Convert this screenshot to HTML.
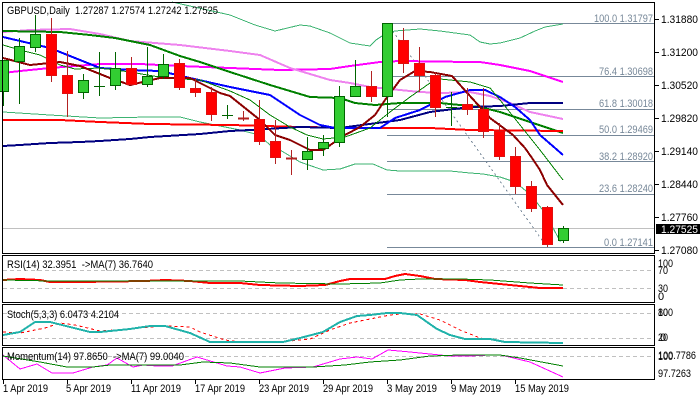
<!DOCTYPE html>
<html><head><meta charset="utf-8"><style>
html,body{margin:0;padding:0;background:#fff;width:700px;height:400px;overflow:hidden}
svg{display:block}
text{font-family:"Liberation Sans",sans-serif;font-size:11px;fill:#000;white-space:pre}
.f{fill:#778899}
.l{fill:none;shape-rendering:crispEdges}
</style></head><body>
<svg width="700" height="400" viewBox="0 0 700 400" xmlns="http://www.w3.org/2000/svg">
<rect width="700" height="400" fill="#fff"/>
<g class="l" stroke="#c0c0c0"><path d="M3 228.500H654"/></g>
<g class="l" stroke="#778899">
<path d="M387 23.500H654M387 76.500H654M387 109.500H654M387 135.500H654M387 161.500H654M387 194.500H654M387 247.500H654"/>
<path d="M387 23L547 247" stroke-dasharray="2 3"/>
</g>
<g class="l">
<path stroke="#3cb371" d="M172 2L230 15L255 25L275 31L300 25L310 26L330 33L350 43L370 46L376 40L385 34L395 31L420 29L440 31L470 35L480 42L490 44L500 43L520 38L535 31L545 27L563 24"/>
<path stroke="#3cb371" d="M3 112L50 115L100 118L150 117L180 117L200 122L220 126L240 130L259 135L270 145L280 150L300 162L323 170L340 169L355 164L373 164L387 170L400 171L450 171L470 173L483 174L500 177L515 182L531 195L545 213L560 241L563 240"/>
<path stroke="#ff00ff" stroke-width="2" d="M3 73L20 71L50 68L100 64L140 64L180 66L230 68L280 70L330 69L350 66L380 62L400 61L470 62L480 62L500 65L530 71L563 82"/>
<path stroke="#ee82ee" stroke-width="2" d="M3 32L30 30L70 29L100 34L130 41L180 45L230 51L260 55L290 68L310 74L330 80L350 83L370 87L390 89L420 92L442 93L470 92L490 96L510 103L530 112L563 119"/>
<path stroke="#008000" stroke-width="2" d="M3 31L60 32L90 35L115 38L150 45L180 56L200 62L230 72L270 85L310 97L340 98L355 103L375 105L400 103L440 103L480 107L500 112L530 122L563 133"/>
<path stroke="#ff0000" stroke-width="2" d="M3 120L60 120L100 122L150 124L230 125L300 127L370 128L430 128L470 130L563 131"/>
<path stroke="#000080" stroke-width="2" d="M3 146L20 145L50 143L80 142L100 141L130 139L150 137L200 134L230 131L250 130L300 127L340 128L362 125L400 120L430 112L470 107L500 106L530 103L563 103"/>
<path stroke="#0000ff" stroke-width="2" d="M3 37L50 48L100 68L130 70L160 71L190 78L230 87L270 95L300 115L320 125L335 128L380 128L395 118L420 110L445 97L470 90L485 90L500 97L515 107L530 120L540 135L555 148L563 155"/>
<path stroke="#008000" d="M3 45L20 50L40 55L60 65L75 69L100 68L130 72L165 78L200 80L230 91L250 100L270 115L290 127L307 135L323 139L345 137L370 128L390 112L410 97L430 83L440 79L470 82L490 88L500 100L520 125L540 150L563 180"/>
<path stroke="#8b0000" stroke-width="2" d="M3 58L30 65L60 62L80 66L110 78L130 85L160 78L190 78L220 93L230 96L260 120L275 135L290 140L310 150L323 150L345 135L360 127L375 115L385 100L400 80L415 71L430 72L452 76L470 96L490 118L513 135L525 148L532 158L540 170L547 185L563 205"/>
</g>
<g class="l" stroke="#006400">
<path d="M3.500 60V106M19.500 38V104M35.500 15V52M83.500 74V99M99.500 52V96M115.500 52V90M147.500 47V87M163.500 54V79M227.500 105V119M307.500 137V170M323.500 135V156M339.500 86V147M355.500 60V96M387.500 23V117M451.500 92V126M563.500 226V243"/>
<path d="M94 86.500H105M222 115.500H233M446 107.500H457" stroke-width="1"/>
</g>
<g class="l" stroke="#b22222">
<path d="M51.500 18V82M67.500 51V117M131.500 57V86M179.500 59V90M195.500 78V97M211.500 87V121M243.500 111V121M259.500 100V145M275.500 120V164M291.500 150V175M371.500 71V102M403.500 28V73M419.500 47V92M435.500 72V117M467.500 88V115M483.500 88V138M499.500 123V160M515.500 147V194M531.500 181V212M547.500 206V247"/>
<path d="M238 118.500H249M286 158.500H297" stroke-width="2"/>
</g>
<g fill="#32cd32" stroke="#006400" stroke-width="1" shape-rendering="crispEdges">
<rect x="-1.500" y="60.500" width="10" height="31"/>
<rect x="14.500" y="46.500" width="10" height="15"/>
<rect x="30.500" y="34.500" width="10" height="13"/>
<rect x="78.500" y="80.500" width="10" height="12"/>
<rect x="110.500" y="68.500" width="10" height="17"/>
<rect x="142.500" y="76.500" width="10" height="8"/>
<rect x="158.500" y="64.500" width="10" height="12"/>
<rect x="302.500" y="151.500" width="10" height="8"/>
<rect x="318.500" y="142.500" width="10" height="6"/>
<rect x="334.500" y="96.500" width="10" height="46"/>
<rect x="350.500" y="86.500" width="10" height="10"/>
<rect x="382.500" y="23.500" width="10" height="73"/>
<rect x="558.500" y="228.500" width="10" height="12"/>
</g>
<g fill="#ff0000" stroke="#e01010" stroke-width="1" shape-rendering="crispEdges">
<rect x="46.500" y="34.500" width="10" height="41"/>
<rect x="62.500" y="75.500" width="10" height="18"/>
<rect x="126.500" y="68.500" width="10" height="16"/>
<rect x="174.500" y="63.500" width="10" height="24"/>
<rect x="190.500" y="88.500" width="10" height="4"/>
<rect x="206.500" y="92.500" width="10" height="22"/>
<rect x="254.500" y="119.500" width="10" height="22"/>
<rect x="270.500" y="141.500" width="10" height="16"/>
<rect x="366.500" y="86.500" width="10" height="10"/>
<rect x="398.500" y="40.500" width="10" height="23"/>
<rect x="414.500" y="63.500" width="10" height="12"/>
<rect x="430.500" y="75.500" width="10" height="32"/>
<rect x="462.500" y="104.500" width="10" height="5"/>
<rect x="478.500" y="109.500" width="10" height="22"/>
<rect x="494.500" y="131.500" width="10" height="25"/>
<rect x="510.500" y="156.500" width="10" height="30"/>
<rect x="526.500" y="186.500" width="10" height="22"/>
<rect x="542.500" y="207.500" width="10" height="37"/>
</g>
<g class="l" stroke="#c0c0c0" stroke-dasharray="4 3">
<path d="M3 270.500H654M3 288.500H654M3 313.500H654M3 338.500H654M3 356.500H654"/>
</g>
<g class="l">
<path stroke="#ff0000" stroke-width="2" d="M3 280L20 279L40 280L50 282L80 282L145 281L165 280L190 281L210 283L240 283L260 285L300 286L325 285L340 281L350 279L385 279L395 276L405 274L420 276L435 279L465 280L480 282L510 285L540 288L563 288"/>
<path stroke="#008000" d="M3 280L50 281L240 281L280 283L340 284L380 283L400 280L420 279L460 279L490 280L530 283L563 285"/>
<path stroke="#ff0000" stroke-dasharray="3 3" d="M3 332L20 333L45 328L60 323L75 325L100 331L130 329L165 326L190 327L200 332L225 340L240 342L280 342L310 339L330 330L350 323L370 319L390 315L400 314L420 314L440 320L460 330L480 338L500 341L520 342L563 343"/>
<path stroke="#20b2aa" stroke-width="2" d="M3 335L20 332L35 322L50 322L70 327L90 332L100 332L130 329L150 326L165 326L190 333L210 342L283 342L300 338L323 332L340 322L357 316L370 315L387 313L400 313L417 315L437 329L450 335L465 339L490 339L505 342L563 343"/>
<path stroke="#ff00ff" d="M3 355L20 369L37 364L52 373L73 373L93 367L107 365L117 358L133 367L143 365L157 366L172 366L197 357L227 366L240 367L260 373L285 368L313 367L340 359L357 357L372 359L388 350L410 352L430 354L450 356L470 356L490 355L500 355L505 356L530 362L563 377"/>
<path stroke="#008000" d="M3 356L40 362L67 367L93 367L110 365L180 365L203 362L230 363L260 367L313 367L345 365L370 362L400 360L430 356L460 355L500 355L520 358L563 366"/>
</g>
<g fill="none" stroke="#000" shape-rendering="crispEdges">
<path d="M2.500 2.500H654.500V253.500H2.500ZM2.500 255.500H654.500V302.500H2.500ZM2.500 304.500H654.500V345.500H2.500ZM2.500 347.500H654.500V379.500H2.500Z"/>
<path d="M655 19.500h4M655 52.500h4M655 85.500h4M655 118.500h4M655 151.500h4M655 184.500h4M655 217.500h4M655 250.500h4M3.500 380v4M67.500 380v4M131.500 380v4M195.500 380v4M259.500 380v4M323.500 380v4M387.500 380v4M451.500 380v4M515.500 380v4"/>
</g>
<text x="7" y="14" textLength="211" lengthAdjust="spacingAndGlyphs">GBPUSD,Daily  1.27287 1.27574 1.27242 1.27525</text>
<text x="7" y="268" textLength="146" lengthAdjust="spacingAndGlyphs">RSI(14) 32.3951  -&gt;MA(7) 36.7640</text>
<text x="7" y="318" textLength="112" lengthAdjust="spacingAndGlyphs">Stoch(5,3,3) 6.0473 4.2104</text>
<text x="7" y="360" textLength="177" lengthAdjust="spacingAndGlyphs">Momentum(14) 97.8650  -&gt;MA(7) 99.0040</text>
<text class="f" x="594" y="22" textLength="59" lengthAdjust="spacingAndGlyphs">100.0 1.31797</text>
<text class="f" x="599" y="75" textLength="54" lengthAdjust="spacingAndGlyphs">76.4 1.30698</text>
<text class="f" x="599" y="107" textLength="54" lengthAdjust="spacingAndGlyphs">61.8 1.30018</text>
<text class="f" x="599" y="133" textLength="54" lengthAdjust="spacingAndGlyphs">50.0 1.29469</text>
<text class="f" x="599" y="160" textLength="54" lengthAdjust="spacingAndGlyphs">38.2 1.28920</text>
<text class="f" x="599" y="192" textLength="54" lengthAdjust="spacingAndGlyphs">23.6 1.28240</text>
<text class="f" x="604" y="246" textLength="49" lengthAdjust="spacingAndGlyphs">0.0 1.27141</text>
<text x="661" y="23" textLength="37" lengthAdjust="spacingAndGlyphs">1.31880</text>
<text x="661" y="56" textLength="37" lengthAdjust="spacingAndGlyphs">1.31200</text>
<text x="661" y="89" textLength="37" lengthAdjust="spacingAndGlyphs">1.30520</text>
<text x="661" y="122" textLength="37" lengthAdjust="spacingAndGlyphs">1.29820</text>
<text x="661" y="155" textLength="37" lengthAdjust="spacingAndGlyphs">1.29140</text>
<text x="661" y="188" textLength="37" lengthAdjust="spacingAndGlyphs">1.28440</text>
<text x="661" y="221" textLength="37" lengthAdjust="spacingAndGlyphs">1.27760</text>
<text x="661" y="254" textLength="37" lengthAdjust="spacingAndGlyphs">1.27080</text>
<rect x="656" y="224" width="44" height="10" fill="#000"/>
<text x="661" y="233" textLength="37" lengthAdjust="spacingAndGlyphs" style="fill:#fff">1.27525</text>
<text x="658" y="267" textLength="15" lengthAdjust="spacingAndGlyphs">100</text>
<text x="658" y="274" textLength="10" lengthAdjust="spacingAndGlyphs">70</text>
<text x="658" y="292" textLength="10" lengthAdjust="spacingAndGlyphs">30</text>
<text x="658" y="300">0</text>
<text x="658" y="316" textLength="15" lengthAdjust="spacingAndGlyphs">100</text>
<text x="658" y="316" textLength="10" lengthAdjust="spacingAndGlyphs">80</text>
<text x="658" y="341" textLength="10" lengthAdjust="spacingAndGlyphs">20</text>
<text x="660" y="341">0</text>
<text x="658" y="359" textLength="38" lengthAdjust="spacingAndGlyphs">100.7786</text>
<text x="658" y="360" textLength="15" lengthAdjust="spacingAndGlyphs">100</text>
<text x="658" y="377" textLength="33" lengthAdjust="spacingAndGlyphs">97.7263</text>
<text x="3" y="392" textLength="45" lengthAdjust="spacingAndGlyphs">1 Apr 2019</text>
<text x="66" y="392" textLength="45" lengthAdjust="spacingAndGlyphs">5 Apr 2019</text>
<text x="131" y="392" textLength="50" lengthAdjust="spacingAndGlyphs">11 Apr 2019</text>
<text x="195" y="392" textLength="50" lengthAdjust="spacingAndGlyphs">17 Apr 2019</text>
<text x="259" y="392" textLength="50" lengthAdjust="spacingAndGlyphs">23 Apr 2019</text>
<text x="323" y="392" textLength="50" lengthAdjust="spacingAndGlyphs">29 Apr 2019</text>
<text x="387" y="392" textLength="50" lengthAdjust="spacingAndGlyphs">3 May 2019</text>
<text x="451" y="392" textLength="50" lengthAdjust="spacingAndGlyphs">9 May 2019</text>
<text x="515" y="392" textLength="54" lengthAdjust="spacingAndGlyphs">15 May 2019</text>
</svg>
</body></html>
